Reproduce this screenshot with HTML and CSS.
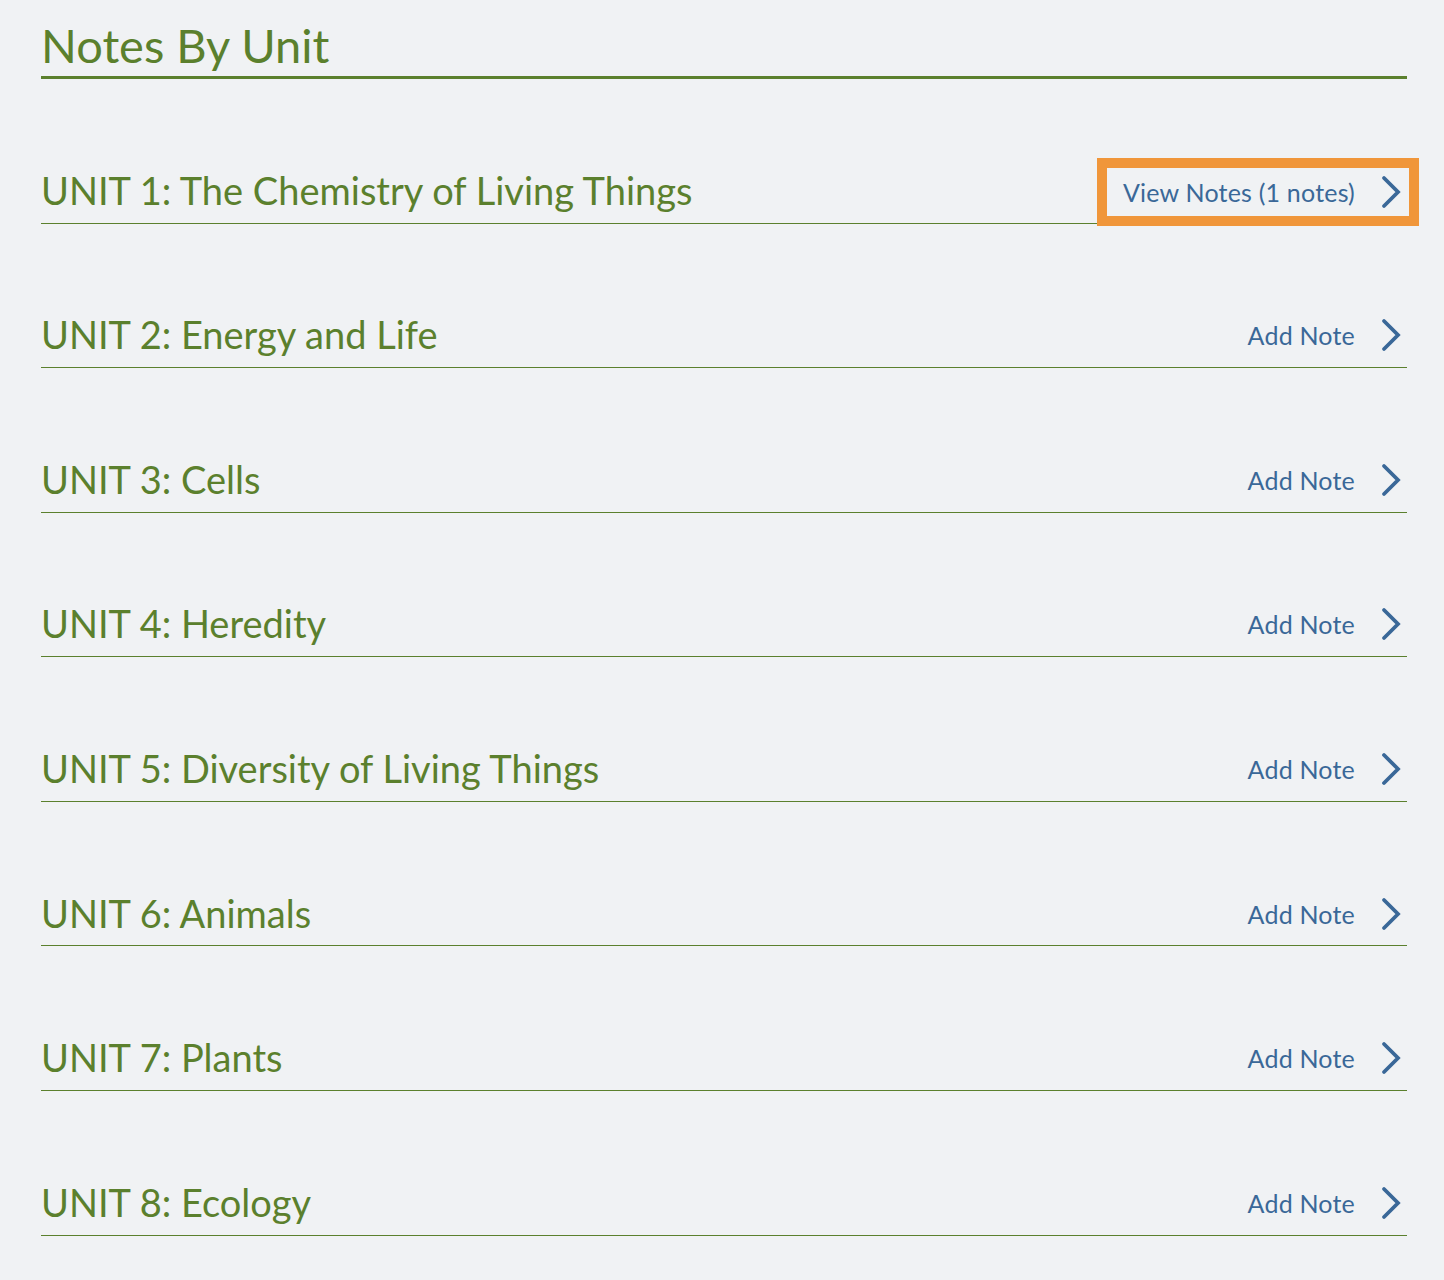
FILE: index.html
```html
<!DOCTYPE html>
<html lang="en">
<head>
<meta charset="utf-8">
<title>Notes By Unit</title>
<link rel="stylesheet" href="styles.css">
</head>
<body>
<main class="page">
  <h1 class="page-title">Notes By Unit</h1>
  <ul class="units">
    <li class="unit">
      <span class="unit-name">UNIT 1: The Chemistry of Living Things</span>
      <a class="unit-link highlighted" href="#">View Notes (1 notes)<svg class="chev" viewBox="0 0 20 34"><polyline points="3,3 17,17 3,31"/></svg></a>
    </li>
    <li class="unit">
      <span class="unit-name">UNIT 2: Energy and Life</span>
      <a class="unit-link" href="#">Add Note<svg class="chev" viewBox="0 0 20 34"><polyline points="3,3 17,17 3,31"/></svg></a>
    </li>
    <li class="unit">
      <span class="unit-name">UNIT 3: Cells</span>
      <a class="unit-link" href="#">Add Note<svg class="chev" viewBox="0 0 20 34"><polyline points="3,3 17,17 3,31"/></svg></a>
    </li>
    <li class="unit">
      <span class="unit-name">UNIT 4: Heredity</span>
      <a class="unit-link" href="#">Add Note<svg class="chev" viewBox="0 0 20 34"><polyline points="3,3 17,17 3,31"/></svg></a>
    </li>
    <li class="unit">
      <span class="unit-name">UNIT 5: Diversity of Living Things</span>
      <a class="unit-link" href="#">Add Note<svg class="chev" viewBox="0 0 20 34"><polyline points="3,3 17,17 3,31"/></svg></a>
    </li>
    <li class="unit">
      <span class="unit-name">UNIT 6: Animals</span>
      <a class="unit-link" href="#">Add Note<svg class="chev" viewBox="0 0 20 34"><polyline points="3,3 17,17 3,31"/></svg></a>
    </li>
    <li class="unit">
      <span class="unit-name">UNIT 7: Plants</span>
      <a class="unit-link" href="#">Add Note<svg class="chev" viewBox="0 0 20 34"><polyline points="3,3 17,17 3,31"/></svg></a>
    </li>
    <li class="unit">
      <span class="unit-name">UNIT 8: Ecology</span>
      <a class="unit-link" href="#">Add Note<svg class="chev" viewBox="0 0 20 34"><polyline points="3,3 17,17 3,31"/></svg></a>
    </li>
  </ul>
</main>
</body>
</html>
```

FILE: styles.css
```css
html, body {
  margin: 0;
  padding: 0;
  background: #f0f2f4;
}
body {
  font-family: Lato, "Open Sans", Arial, sans-serif;
  color: #5b802d;
}
.page {
  padding: 0 37px 0 41px;
  min-height: 1280px;
  box-sizing: border-box;
}
.page-title {
  margin: 0;
  height: 79px;
  box-sizing: border-box;
  padding-top: 19px;
  font-size: 47px;
  line-height: 52px;
  font-weight: 400;
  color: #5b802d;
  border-bottom: 3px solid #5b802d;
}
.units {
  list-style: none;
  margin: 0;
  padding: 0;
}
.unit {
  height: 144.57px;
  box-sizing: border-box;
  display: flex;
  align-items: center;
  justify-content: space-between;
  padding-top: 90px;
  padding-bottom: 10px;
  border-bottom: 1px solid #5b802d;
}
.unit-name {
  font-size: 38px;
  line-height: 44px;
  margin-top: -2px;
}
.unit-link {
  display: inline-flex;
  align-items: center;
  gap: 26px;
  padding: 4.5px 6px 4.5px 0;
  color: #3a6898;
  text-decoration: none;
  font-size: 25px;
  line-height: 34px;
  letter-spacing: 0.2px;
}
.chev {
  width: 20px;
  height: 34px;
  fill: none;
  stroke: #3a6898;
  stroke-width: 3.8;
  stroke-linecap: round;
  stroke-linejoin: miter;
}
.highlighted {
  padding: 5px 6px 5px 14px;
  margin-top: 3px;
  outline: 10px solid #f0963a;
  outline-offset: 2px;
}
```
